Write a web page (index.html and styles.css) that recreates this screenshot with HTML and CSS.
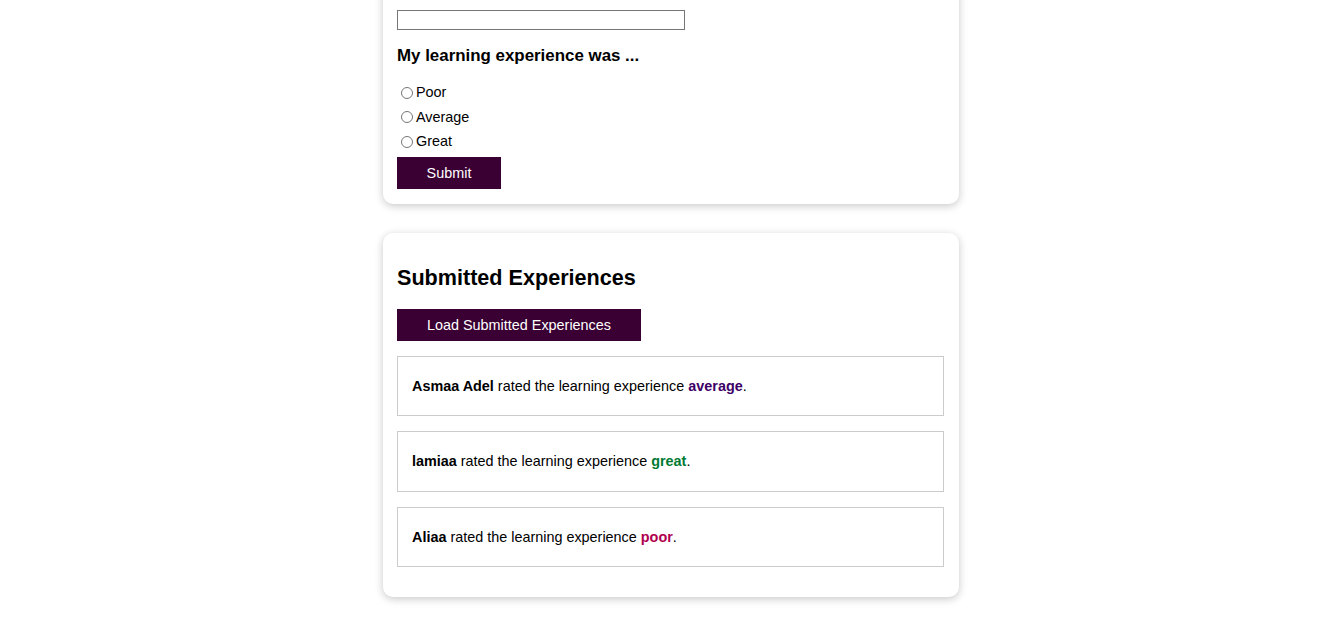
FILE: index.html
```html
<!DOCTYPE html>
<html lang="en">
<head>
<meta charset="utf-8">
<title>Learning Experience</title>
<link rel="stylesheet" href="styles.css">
</head>
<body>
<main class="page">
  <section class="card card-form">
    <form class="form">
      <input class="name-input" type="text" aria-label="Your name">
      <h3 class="question">My learning experience was ...</h3>
      <div class="options">
        <label class="option"><input type="radio" name="rating" value="poor">Poor</label>
        <label class="option"><input type="radio" name="rating" value="average">Average</label>
        <label class="option"><input type="radio" name="rating" value="great">Great</label>
      </div>
      <button class="btn" type="button">Submit</button>
    </form>
  </section>

  <section class="card">
    <h2 class="title">Submitted Experiences</h2>
    <button class="btn btn-load" type="button">Load Submitted Experiences</button>
    <div class="entries">
      <div class="entry"><strong>Asmaa Adel</strong> rated the learning experience <strong class="r-average">average</strong>.</div>
      <div class="entry"><strong>lamiaa</strong> rated the learning experience <strong class="r-great">great</strong>.</div>
      <div class="entry"><strong>Aliaa</strong> rated the learning experience <strong class="r-poor">poor</strong>.</div>
    </div>
  </section>
</main>
</body>
</html>
```
FILE: styles.css
```css
* { box-sizing: border-box; }
html, body { margin: 0; padding: 0; background: #fff; }
body {
  font-family: "Liberation Sans", Arial, sans-serif;
  color: #000;
  font-size: 14.4px;
}
.page {
  width: 576px;
  margin: -20px 0 0 calc(50% - 289px);
  display: flex;
  flex-direction: column;
  gap: 29px;
  padding-bottom: 26px;
}
.card {
  background: #fff;
  border-radius: 10px;
  box-shadow: 0 2px 8px rgba(0,0,0,0.22);
  padding: 15px 15px 30px 14px;
}
.card-form {
  padding: 30px 15px 15px 14px;
}
.form { display: flex; flex-direction: column; align-items: flex-start; }
.name-input {
  width: 288px;
  height: 20px;
  border: 1px solid #767676;
  padding: 1px 2px;
  font: inherit;
  margin: 0;
}
.question {
  font-size: 16.9px;
  font-weight: bold;
  margin: 16px 0 17px;
}
.options { display: flex; flex-direction: column; gap: 5px; margin-bottom: 5px; }
.option {
  display: flex;
  align-items: center;
  font-size: 14.4px;
  line-height: 19.5px;
}
.option input {
  margin: 0 3px 0 4px;
  width: 12px;
  height: 12px;
}
.btn {
  background: #3a0033;
  color: #fff;
  border: none;
  font-family: "Liberation Sans", Arial, sans-serif;
  font-size: 14.4px;
  height: 32px;
  width: 104px;
  padding: 0;
  cursor: pointer;
}
.btn-load { width: 244px; }
.title {
  font-size: 21.6px;
  font-weight: bold;
  margin: 17px 0 18px;
}
.entries {
  display: flex;
  flex-direction: column;
  gap: 15px;
  margin-top: 15px;
}
.entry {
  border: 1px solid #ccc;
  height: 60.5px;
  padding: 0 14px;
  display: flex;
  align-items: center;
  white-space: pre;
  font-size: 14.4px;
}
.entry strong { font-weight: bold; }
.r-average { color: #3d0066; }
.r-great { color: #007a33; }
.r-poor { color: #b0004f; }
```
